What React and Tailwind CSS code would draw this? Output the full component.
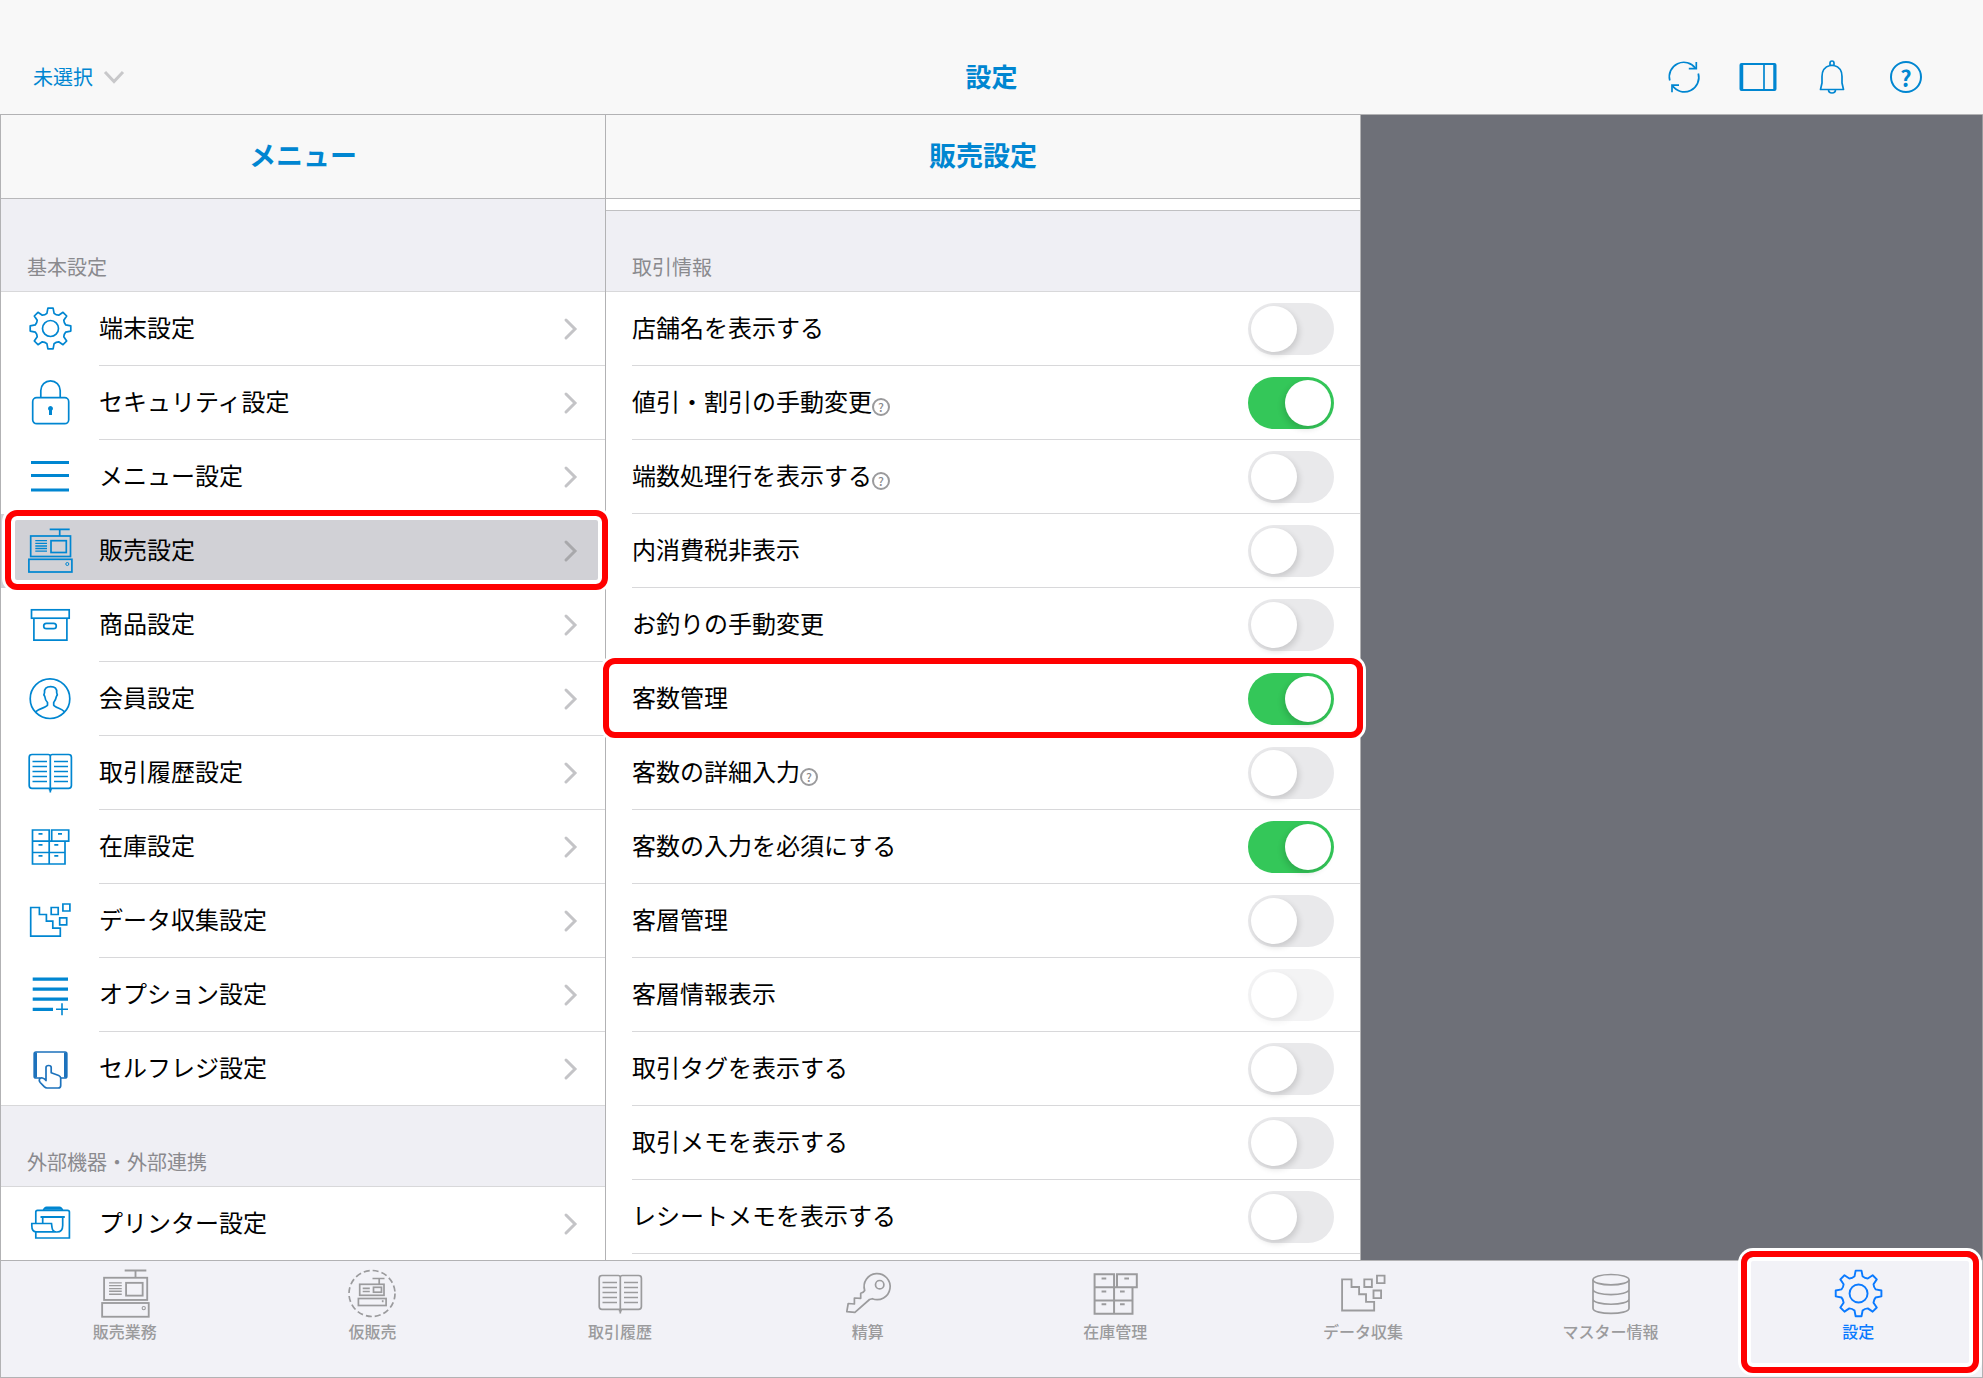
import React from "react";

function Svg({ children, className = "size-12", box = 48, sw = 1.7 }) {
  return (
    <svg
      className={className}
      viewBox={`0 0 ${box} ${box}`}
      fill="none"
      stroke="currentColor"
      strokeWidth={sw}
      aria-hidden="true"
    >
      {children}
    </svg>
  );
}

const GEAR_PATH = (() => {
  const turn = ([x, y], k) => {
    const a = (k * Math.PI) / 4;
    const px = 24.5 + x * Math.cos(a) - y * Math.sin(a);
    const py = 23.5 + x * Math.sin(a) + y * Math.cos(a);
    return `${px.toFixed(2)} ${py.toFixed(2)}`;
  };
  let d = "";
  for (let k = 0; k < 8; k++) {
    d += `${k ? "L" : "M"}${turn([-3.6, -15.2], k)}L${turn([-2.6, -20.3], k)}L${turn([2.6, -20.3], k)}L${turn([3.6, -15.2], k)}`;
    d += `Q${turn([5.6, -13.4], k)} ${turn([-3.6, -15.2], k + 1)}`;
  }
  return d + "Z";
})();

const GearIcon = (p) => (
  <Svg {...p}>
    <path d={GEAR_PATH} strokeLinejoin="round" />
    <circle cx="24.5" cy="23.5" r="8" />
  </Svg>
);

const LockIcon = (p) => (
  <Svg {...p}>
    <rect x="6.7" y="18.7" width="36" height="26" rx="4" />
    <path d="M14.8 18.7V11.5a9.7 9.7 0 0 1 19.4 0v7.2" />
    <path d="M24.5 27a2.5 2.5 0 0 1 1.5 4.5V36h-3v-4.5a2.5 2.5 0 0 1 1.5-4.5z" fill="currentColor" stroke="none" />
  </Svg>
);

const LinesIcon = (p) => (
  <Svg {...p} sw={3}>
    <path d="M5 9.5h38M5 22.5h38M5 37h38" />
  </Svg>
);

const RegisterIcon = (p) => (
  <Svg {...p}>
    <path d="M23.7 2.3h20M33.7 2.3V9" />
    <rect x="4.7" y="9" width="39.8" height="20.5" />
    <path d="M9.3 13.7H21M9.3 16.3H21M9.3 19H21M9.3 21.5H21M9.3 24.2H21" strokeWidth="1.3" />
    <rect x="25" y="13.7" width="15.3" height="11.8" />
    <rect x="2.9" y="32.3" width="43" height="12.7" />
    <circle cx="41.3" cy="37" r="1.5" strokeWidth="1" />
  </Svg>
);

const BoxIcon = (p) => (
  <Svg {...p}>
    <rect x="5.5" y="8.8" width="37.7" height="8.4" />
    <path d="M7.9 17.2v22h33v-22" />
    <rect x="17.7" y="22.3" width="12.6" height="5.4" rx="2.7" />
  </Svg>
);

const PersonIcon = (p) => (
  <Svg {...p}>
    <circle cx="24" cy="23.7" r="19.8" />
    <path d="M9.5 36.8C13 33.5 20.5 32.5 21.5 30.2V27.5C19.5 25.5 19 23.5 18.8 21.5C18 20.5 17.7 19 18.5 17.8C18 13.5 20.5 11.6 24.6 11.6C29 11.6 31.2 13.5 30.7 17.8C31.5 19 31.2 20.5 30.4 21.5C30 23.5 29.5 25.5 27.7 27.5V30.2C28.7 32.5 35.5 33.5 38.6 36.8" />
  </Svg>
);

const BookIcon = (p) => (
  <Svg {...p}>
    <path d="M24.3 43.5V7.5q0-2-2-2H6q-2.8 0-2.8 2.8v28.2q0 2.800 2.800 2.800h36.600q2.800 0 2.800-2.800V8.300q0-2.800-2.800-2.800H26.300q-2 0-2 2" />
    <path d="M22.8 39.5h3v2h-3z" fill="currentColor" stroke="none" />
    <path d="M6.500 12.500H21M6.500 17.500H21M6.500 22.500H21M6.500 27.500H21M6.500 32.500H21M28 12.500h14M28 17.500h14M28 22.500h14M28 27.500h14M28 32.500h14" strokeWidth="1.300" />
  </Svg>
);

const CabinetIcon = (p) => (
  <Svg {...p}>
    <path d="M6.500 7h16.700v34H6.500zM6.500 18.200H39V41H6.500zM6.500 29.500H39M25.700 7h17v11.200h-17z" />
    <path d="M12.500 10.800h4M32 10.800h4M12.500 21.800h4M28.300 21.800h4M12.500 32.800h4M28.300 32.800h4" />
  </Svg>
);

const DataIcon = (p) => (
  <Svg {...p}>
    <path d="M4.700 10.500h8.700v7h7v6.700h6.400v7h7.500v8H4.700z" />
    <path d="M25.200 10.500h7v7h-7zM36.900 7h7v7h-7zM33.700 20.800h7v7h-7z" />
  </Svg>
);

const OptionIcon = (p) => (
  <Svg {...p} sw={3.3}>
    <path d="M6.700 8.200H42M6.700 18.200H42M6.700 28.200H42M6.700 38.300H27" />
    <path d="M30 38.300h12M36 32.300v12" strokeWidth="1.600" />
  </Svg>
);

const TouchIcon = (p) => (
  <Svg {...p}>
    <path d="M14.500 33H10q-1.800 0-1.800-1.800V8.800Q8.200 7 10 7h29q1.800 0 1.800 1.800v22.400q0 1.800-1.800 1.800h-4" />
    <path d="M9.500 7.500v25M39.500 7.500v25" strokeWidth="3" />
    <path
      d="M20 33.500V22.500q0-2 2.600-2t2.600 2v5.300l7.500 2.700q2 .8 2 2.800v7.200q0 2.500-2.500 2.500H21q-1.500 0-2.800-1.300l-4-4.200q-1.500-1.700-.7-3.500.8-1.600 3-1 2 .5 3.500 2.500z"
      strokeLinejoin="round"
    />
  </Svg>
);

const PrinterIcon = (p) => (
  <Svg {...p}>
    <path d="M9.800 23.500V12q0-1.700 1.700-1.700h30q1.900 0 1.900 1.700v26H9.800v-6" />
    <path d="M17.500 10.300q1-3 3-3h13q2 0 3 3M18 8.800h18" />
    <path d="M14.500 17h24.300" strokeWidth="2" />
    <path d="M16.700 17v6.700M36.700 17.500v8q0 6.500-5.700 6.500-4.500 0-5-4.500l-.5-4H5.800v2q0 6.300 4.200 6.300h20" />
  </Svg>
);

const TempSaleIcon = (p) => (
  <Svg {...p} box={52}>
    <circle cx="26" cy="25.500" r="23" strokeDasharray="6 3.030" />
    <path d="M26.500 10.500h12M33.200 10.500V16" />
    <rect x="13.700" y="16.300" width="24.300" height="11" />
    <path d="M16.700 20.300h7.100M16.700 23.500h7.100" />
    <rect x="27.500" y="19.300" width="8" height="4.900" />
    <rect x="12.400" y="30.500" width="27.700" height="7" />
    <path d="M36.700 32.200v2" />
  </Svg>
);

const KeyIcon = (p) => (
  <Svg {...p} box={52}>
    <path
      d="M30.300 30.700A13 13 0 1 0 22.700 22.500Q21.500 24.500 18.700 25.200V30.300L12.400 30V36L6.200 35.500L4.800 43.700L12.900 44.300L27.500 31.500Z"
      strokeLinejoin="round"
    />
    <circle cx="37.700" cy="16.700" r="4.200" />
  </Svg>
);

const DatabaseIcon = (p) => (
  <Svg {...p} box={52}>
    <ellipse cx="26" cy="11.700" rx="18" ry="5.200" />
    <path d="M8 11.700v28.500c0 7 36 7 36 0V11.700M8 21.300c0 7 36 7 36 0M8 31c0 7 36 7 36 0" />
  </Svg>
);

const RefreshIcon = () => (
  <Svg className="size-10" box={40}>
    <path d="M5.800 23.500A14.500 14.500 0 0 1 31.500 11.200M34.300 16.500A14.500 14.500 0 0 1 8.500 28.800" />
    <path d="M32.300 5v6.700h-7.500M8 35.200v-7h7" />
  </Svg>
);

const SidebarIcon = () => (
  <Svg className="size-10" box={40}>
    <rect x="2.500" y="7" width="35" height="26" rx="1" strokeWidth="2" />
    <path d="M4 7v26M36.500 7v26" strokeWidth="2.500" />
    <path d="M26 7v26" />
  </Svg>
);

const BellIcon = () => (
  <Svg className="size-10" box={40}>
    <path
      d="M18 8.500V6.300q0-2.300 2-2.300t2 2.300v2.200q8 2 8 11v6.500l1.500 6.500h-23l1.500-6.500v-6.500q0-9 8-11z"
      strokeLinejoin="round"
    />
    <path d="M16.500 32.500q0 3.500 3.500 3.500t3.500-3.500M18 8.300h4" />
  </Svg>
);

const HelpIcon = () => (
  <span className="flex size-8 items-center justify-center rounded-full border-2 border-current text-[22px] leading-none font-bold">
    ?
  </span>
);

const MENU = [
  ["端末設定", GearIcon],
  ["セキュリティ設定", LockIcon],
  ["メニュー設定", LinesIcon],
  ["販売設定", RegisterIcon],
  ["商品設定", BoxIcon],
  ["会員設定", PersonIcon],
  ["取引履歴設定", BookIcon],
  ["在庫設定", CabinetIcon],
  ["データ収集設定", DataIcon],
  ["オプション設定", OptionIcon],
  ["セルフレジ設定", TouchIcon],
];

const SETTINGS = [
  { label: "店舗名を表示する" },
  { label: "値引・割引の手動変更", on: true, help: true },
  { label: "端数処理行を表示する", help: true },
  { label: "内消費税非表示" },
  { label: "お釣りの手動変更" },
  { label: "客数管理", on: true, marked: true },
  { label: "客数の詳細入力", help: true },
  { label: "客数の入力を必須にする", on: true },
  { label: "客層管理" },
  { label: "客層情報表示", disabled: true },
  { label: "取引タグを表示する" },
  { label: "取引メモを表示する" },
  { label: "レシートメモを表示する" },
];

const TABS = [
  ["販売業務", RegisterIcon, "size-[52px]"],
  ["仮販売", TempSaleIcon, "size-[52px]"],
  ["取引履歴", BookIcon, "size-12"],
  ["精算", KeyIcon, "size-[52px]"],
  ["在庫管理", CabinetIcon, "size-14"],
  ["データ収集", DataIcon, "size-[52px]"],
  ["マスター情報", DatabaseIcon, "size-[52px]"],
  ["設定", GearIcon, "size-[54px]"],
];

function Mark({ className }) {
  return (
    <span
      className={`pointer-events-none absolute z-10 rounded-xl border-6 border-[#ff0000] ring-3 ring-white inset-ring-4 inset-ring-white ${className}`}
    />
  );
}

function MenuRow({ label, Icon, active, last }) {
  return (
    <li className="relative">
      <button
        className={`flex w-full items-center gap-[25px] pl-[25px] text-left ${last ? "h-[73px]" : "h-[74px]"} ${active ? "bg-[#d1d1d6]" : "bg-white"}`}
        aria-current={active ? "page" : undefined}
      >
        <span className={label === "セルフレジ設定" ? "text-[#1d72bc]" : "text-[#0086d1]"}>
          <Icon />
        </span>
        <span className={`flex h-full flex-1 items-center justify-between border-[#d8d8da] pr-[27px] ${last ? "" : "border-b"}`}>
          <span className="pb-[3px] text-2xl">{label}</span>
          <svg
            className={`h-6 w-4 ${active ? "text-[#a8a8ab]" : "text-[#c4c4c7]"}`}
            viewBox="0 0 16 24"
            fill="none"
            stroke="currentColor"
            strokeWidth="3"
            strokeLinecap="round"
            aria-hidden="true"
          >
            <path d="M4 3l9 9-9 9" />
          </svg>
        </span>
      </button>
      {active && <Mark className="-top-1 -right-[3px] -bottom-0.5 left-1" />}
    </li>
  );
}

function PaneTitle({ children }) {
  return (
    <h2 className="flex h-[84px] shrink-0 items-center justify-center border-b border-[#b8b8ba] bg-[#f8f8f8] pb-[3px] text-[27px] font-bold text-[#0086d1]">
      {children}
    </h2>
  );
}

function SectionTitle({ children, className }) {
  return (
    <h3 className={`flex shrink-0 items-end border-b border-[#d8d8da] bg-[#efeff4] pb-3 pl-[26px] text-xl leading-6 text-[#8a8a8e] ${className}`}>
      {children}
    </h3>
  );
}

export default function App() {
  return (
    <div className="flex h-screen w-full flex-col overflow-hidden bg-white font-['Noto_Sans_CJK_JP',sans-serif] text-black">
      <header className="grid h-[115px] shrink-0 grid-cols-3 items-center border-b border-[#b2b2b4] bg-[#f8f8f8] pt-10 text-[#0086d1]">
        <button className="flex items-center gap-[10px] justify-self-start pl-[33px] text-xl">
          未選択
          <svg className="h-4 w-[22px] text-[#c8c8ca]" viewBox="0 0 22 16" fill="none" stroke="currentColor" strokeWidth="3" aria-hidden="true">
            <path d="M2 3l9 9.500L20 3" />
          </svg>
        </button>
        <h1 className="pb-[3px] text-center text-[26px] font-bold">設定</h1>
        <div className="flex justify-end gap-[34px] pr-[57px]">
          <button aria-label="更新"><RefreshIcon /></button>
          <button aria-label="サイドバー"><SidebarIcon /></button>
          <button aria-label="通知"><BellIcon /></button>
          <button aria-label="ヘルプ" className="flex size-10 items-center justify-center"><HelpIcon /></button>
        </div>
      </header>

      <main className="grid min-h-0 flex-1 grid-cols-[606fr_755fr_622fr] overflow-hidden">
        <nav className="flex min-h-0 flex-col border-x border-[#b2b2b4]">
          <PaneTitle>メニュー</PaneTitle>
          <SectionTitle className="h-[93px]">基本設定</SectionTitle>
          <ul>
            {MENU.map(([label, Icon], i) => (
              <MenuRow
                key={label}
                label={label}
                Icon={Icon}
                active={label === "販売設定"}
                last={i === MENU.length - 1}
              />
            ))}
          </ul>
          <SectionTitle className="h-[82px] border-t">外部機器・外部連携</SectionTitle>
          <ul>
            <MenuRow label="プリンター設定" Icon={PrinterIcon} />
          </ul>
        </nav>

        <section className="flex min-h-0 flex-col border-r border-[#b2b2b4]">
          <PaneTitle>販売設定</PaneTitle>
          <div className="h-3 shrink-0 border-b border-[#c0c0c2] bg-white" />
          <SectionTitle className="h-[81px]">取引情報</SectionTitle>
          <ul>
            {SETTINGS.map((s, i) => (
              <li key={s.label} className="relative h-[74px] pl-[26px]">
                <div className="flex h-full items-center border-b border-[#d8d8da] pr-[26px]">
                  <label htmlFor={`setting-${i}`} className="pb-[3px] text-2xl">
                    {s.label}
                  </label>
                  {s.help && (
                    <button
                      aria-label={`${s.label}の説明`}
                      className="mt-2 flex size-[18px] items-center justify-center rounded-full border-2 border-[#9a9a9c] text-xs leading-none font-medium text-[#8a8a8c]"
                    >
                      ?
                    </button>
                  )}
                  <input
                    id={`setting-${i}`}
                    type="checkbox"
                    role="switch"
                    defaultChecked={s.on}
                    disabled={s.disabled}
                    className="ml-auto h-[52px] w-[86px] appearance-none rounded-full bg-[#e9e9eb] p-[3px] before:block before:size-[46px] before:rounded-full before:bg-white before:shadow-[2px_3px_6px_rgba(0,0,0,0.14)] checked:bg-[#34c759] checked:before:translate-x-[34px] checked:before:shadow-[-2px_3px_6px_rgba(0,0,0,0.14)] disabled:opacity-50"
                  />
                </div>
                {s.marked && <Mark className="-top-1 -right-[3px] -bottom-0.5 -left-[3px]" />}
              </li>
            ))}
          </ul>
        </section>

        <div className="border-r border-[#9a9a9e] bg-[#6e7078]" />
      </main>

      <nav className="h-[118px] shrink-0 border border-[#b2b2b4] bg-[#f2f2f7]">
        <ul className="grid h-full grid-cols-8">
          {TABS.map(([label, Icon, size]) => (
            <li key={label} className="relative">
              <button
                className={`flex w-full flex-col items-center pt-[5px] ${label === "設定" ? "text-[#0a7aff]" : "text-[#9b9b9d]"}`}
              >
                <span className="flex h-14 items-center">
                  <Icon className={size} />
                </span>
                <span className="text-base leading-[18px] font-medium">{label}</span>
              </button>
              {label === "設定" && <Mark className="-top-[10px] right-[3px] bottom-1 left-[7px]" />}
            </li>
          ))}
        </ul>
      </nav>
    </div>
  );
}
